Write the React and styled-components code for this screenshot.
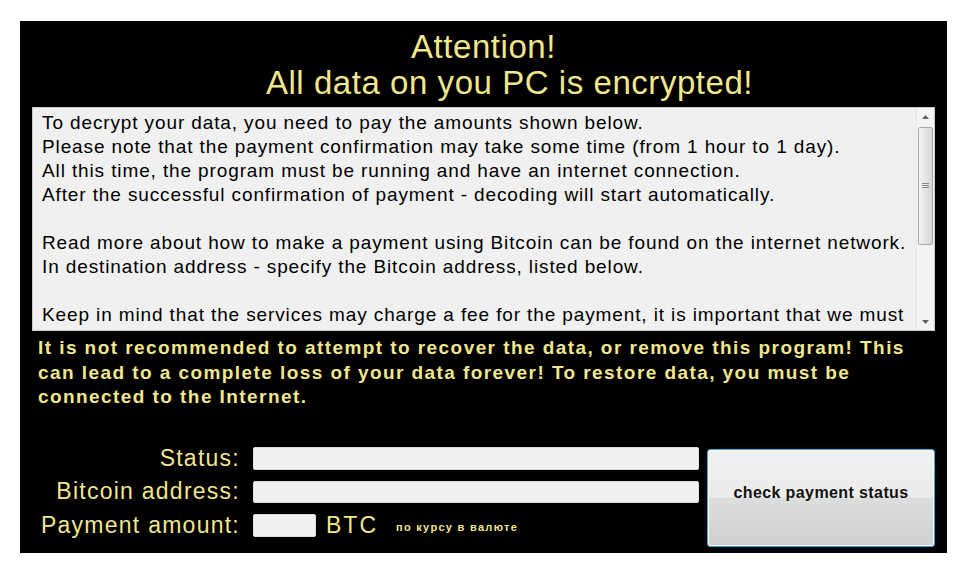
import styled, { createGlobalStyle } from "styled-components";

const GlobalStyle = createGlobalStyle`
	html, body {
		margin: 0;
		padding: 0;
		background: #ffffff;
	}
	body {
		font-family: "Liberation Sans", Arial, sans-serif;
	}
`;

const KHAKI = "#f0e68c";

const Page = styled.div`
	width: 970px;
	height: 580px;
	padding: 21px 23px 0 20px;
	box-sizing: border-box;
`;

const Panel = styled.div`
	background: #000000;
	height: 532px;
	padding: 0 12px;
	box-sizing: border-box;
	display: flex;
	flex-direction: column;
`;

const Title = styled.h1`
	margin: 0;
	padding-top: 8px;
	color: ${KHAKI};
	font-size: 33px;
	font-weight: normal;
	line-height: 36px;
	letter-spacing: 0.55px;
	text-align: center;
`;

const TitleLine = styled.div`
	padding-left: ${(p) => p.$shift || 0}px;
`;

const TextBox = styled.div`
	margin-top: 6px;
	height: 224px;
	box-sizing: border-box;
	border: 1px solid #c9c9c9;
	background: #f0f0f0;
	display: flex;
`;

const TextContent = styled.div`
	flex: 1;
	overflow: hidden;
	padding: 3px 0 0 9px;
	font-size: 19px;
	line-height: 24px;
	letter-spacing: 0.88px;
	color: #000000;
`;

const Line = styled.div`
	white-space: nowrap;
	min-height: 24px;
`;

const ScrollBar = styled.div`
	width: 17px;
	display: flex;
	flex-direction: column;
	align-items: center;
	background: #f4f4f4;
	border-left: 1px solid #e8e8e8;
`;

const Arrow = styled.div`
	height: 17px;
	width: 17px;
	display: flex;
	align-items: center;
	justify-content: center;
`;

const Thumb = styled.div`
	width: 15px;
	height: 118px;
	margin-top: 2px;
	box-sizing: border-box;
	border: 1px solid #a9a9a9;
	border-radius: 2px;
	background: linear-gradient(to right, #f3f3f3, #e2e2e2 60%, #d4d4d4);
	display: flex;
	align-items: center;
	justify-content: center;
`;

const Track = styled.div`
	flex: 1;
`;

const Warning = styled.p`
	margin: 5px 0 0 6px;
	color: ${KHAKI};
	font-size: 19px;
	font-weight: bold;
	line-height: 24.5px;
	letter-spacing: 1.43px;
	white-space: nowrap;
`;

const Form = styled.div`
	margin-top: 37px;
	display: flex;
	align-items: flex-start;
	gap: 8px;
`;

const Fields = styled.div`
	display: grid;
	grid-template-columns: 208px 446px;
	grid-template-rows: 23px 22px 23px;
	column-gap: 13px;
	row-gap: 11px;
	align-items: center;
`;

const Label = styled.label`
	color: ${KHAKI};
	font-size: 23px;
	letter-spacing: 1.25px;
	text-align: right;
	white-space: nowrap;
	line-height: 23px;
`;

const Input = styled.div`
	height: ${(p) => p.$h || 23}px;
	width: ${(p) => p.$w || 446}px;
	box-sizing: border-box;
	background: #f0f0f0;
	border: 1px solid #dcdcdc;
	border-radius: 2px;
`;

const AmountRow = styled.div`
	display: flex;
	align-items: center;
	gap: 10px;
`;

const Currency = styled.span`
	color: ${KHAKI};
	font-size: 23px;
	letter-spacing: 2px;
	line-height: 23px;
`;

const Note = styled.span`
	margin-left: 8px;
	color: ${KHAKI};
	font-size: 11px;
	font-weight: bold;
	letter-spacing: 1.3px;
	padding-top: 3px;
`;

const CheckButton = styled.button`
	margin-top: 2px;
	width: 228px;
	height: 98px;
	border: 1px solid #35a2d6;
	border-radius: 3px;
	box-shadow: inset 0 0 0 1px #f8fbfd;
	background: linear-gradient(
		to bottom,
		#f1f1f1 0%,
		#ebebeb 49%,
		#dddddd 50%,
		#d0d0d0 100%
	);
	font-family: "Liberation Sans", Arial, sans-serif;
	font-size: 16px;
	font-weight: bold;
	letter-spacing: 0.4px;
	color: #111111;
	padding: 0 0 10px 0;
`;

const lines = [
	"To decrypt your data, you need to pay the amounts shown below.",
	"Please note that the payment confirmation may take some time (from 1 hour to 1 day).",
	"All this time, the program must be running and have an internet connection.",
	"After the successful confirmation of payment - decoding will start automatically.",
	"",
	"Read more about how to make a payment using Bitcoin can be found on the internet network.",
	"In destination address - specify the Bitcoin address, listed below.",
	"",
	"Keep in mind that the services may charge a fee for the payment, it is important that we must",
];

const App = () => {
	return (
		<Page>
			<GlobalStyle />
			<Panel>
				<Title>
					<TitleLine>Attention!</TitleLine>
					<TitleLine $shift={52}>All data on you PC is encrypted!</TitleLine>
				</Title>
				<TextBox>
					<TextContent>
						{lines.map((l, i) => (
							<Line key={i}>{l || "\u00a0"}</Line>
						))}
					</TextContent>
					<ScrollBar>
						<Arrow>
							<svg width="7" height="4" viewBox="0 0 7 4">
								<path d="M0 4 L3.5 0 L7 4 Z" fill="#606060" />
							</svg>
						</Arrow>
						<Thumb>
							<svg width="7" height="6" viewBox="0 0 7 6">
								<path d="M0 0.5H7M0 2.5H7M0 4.5H7" stroke="#8a8a8a" strokeWidth="1" />
							</svg>
						</Thumb>
						<Track />
						<Arrow>
							<svg width="7" height="4" viewBox="0 0 7 4">
								<path d="M0 0 L3.5 4 L7 0 Z" fill="#606060" />
							</svg>
						</Arrow>
					</ScrollBar>
				</TextBox>
				<Warning>
					It is not recommended to attempt to recover the data, or remove this program! This
					<br />
					can lead to a complete loss of your data forever! To restore data, you must be
					<br />
					connected to the Internet.
				</Warning>
				<Form>
					<Fields>
						<Label>Status:</Label>
						<Input />
						<Label>Bitcoin address:</Label>
						<Input $h={22} />
						<Label>Payment amount:</Label>
						<AmountRow>
							<Input $w={63} />
							<Currency>BTC</Currency>
							<Note>по курсу в валюте</Note>
						</AmountRow>
					</Fields>
					<CheckButton>check payment status</CheckButton>
				</Form>
			</Panel>
		</Page>
	);
};

export default App;
